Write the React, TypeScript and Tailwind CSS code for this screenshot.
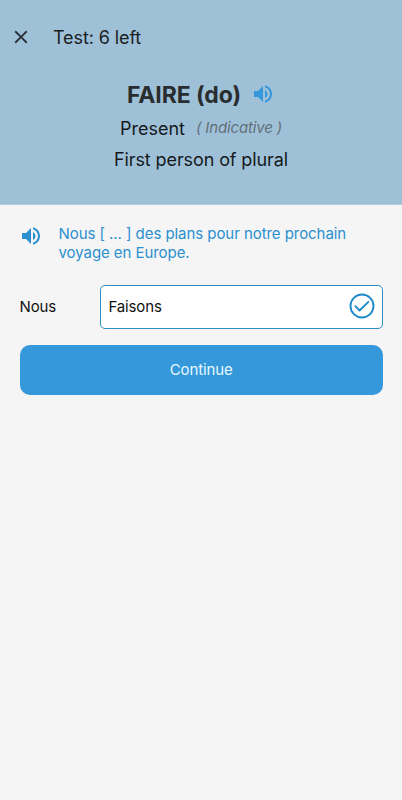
import { MdClose, MdVolumeUp } from "react-icons/md";

const CheckCircle = () => (
  <svg
    width="26"
    height="26"
    viewBox="0 0 26 26"
    fill="none"
    stroke="#1f8acb"
    className="mb-0.5"
  >
    <circle cx="13" cy="13" r="11.5" strokeWidth="1.9" />
    <path
      d="M6.4 13.2l4.2 4.3 8.8-8.6"
      strokeWidth="1.9"
      strokeLinecap="round"
      strokeLinejoin="round"
    />
  </svg>
);

const Header = () => {
  return (
    <header className="h-[205px] bg-[#9fc1d8] border-b border-[#b3cbdb]">
      <div className="flex items-center h-[74px] pl-[11px]">
        <button className="w-5 h-5 flex items-center justify-center text-[#2a3136]">
          <MdClose size={22} className="shrink-0" />
        </button>
        <h1 className="ml-[22px] pt-0.5 text-lg leading-6 tracking-[-0.1px] text-[#1b2023]">
          Test: 6 left
        </h1>
      </div>
      <div className="flex flex-col items-center pt-px">
        <div className="flex items-center h-10">
          <h2 className="text-[23px] font-bold tracking-[-0.1px] text-[#2a2d2f]">
            FAIRE (do)
          </h2>
          <MdVolumeUp size={24} className="ml-2.5 mb-0.5 text-[#3498db]" />
        </div>
        <div className="flex items-center h-7">
          <span className="text-lg text-[#15191c]">Present</span>
          <span className="ml-[11px] mb-px text-[15px] italic tracking-[-0.16px] text-[#63707a]">
            ( Indicative )
          </span>
        </div>
        <p className="h-[34px] leading-[34px] text-lg tracking-[-0.1px] text-[#15191c]">
          First person of plural
        </p>
      </div>
    </header>
  );
};

const App = () => {
  return (
    <div className="w-full min-h-screen bg-[#f5f5f5] font-['Inter',sans-serif]">
      <Header />
      <main className="pl-[19.5px] pr-[19px] pt-5">
        <div className="flex text-[#2b8fd0]">
          <MdVolumeUp size={24} className="shrink-0 -ml-px mt-[-1px]" />
          <p className="ml-4 text-[15px] leading-[18.5px] tracking-[-0.06px]">
            Nous [ ... ] des plans pour notre prochain
            <br />
            voyage en Europe.
          </p>
        </div>
        <div className="flex items-center mt-[23px]">
          <span className="w-20 text-[15px] tracking-[-0.15px] text-[#111]">
            Nous
          </span>
          <div className="flex-1 flex items-center justify-between h-11 pl-2 pr-[7px] bg-white border border-[#2d8dc4] rounded-[5px]">
            <span className="text-[15px] tracking-[-0.15px] text-[#111]">
              Faisons
            </span>
            <CheckCircle />
          </div>
        </div>
        <button className="mt-[15.5px] w-full h-[50px] rounded-[10px] bg-[#3498db] text-[15px] tracking-[-0.1px] text-[#e8f8ff]">
          <span className="block pt-px">Continue</span>
        </button>
      </main>
    </div>
  );
};

export default App;
